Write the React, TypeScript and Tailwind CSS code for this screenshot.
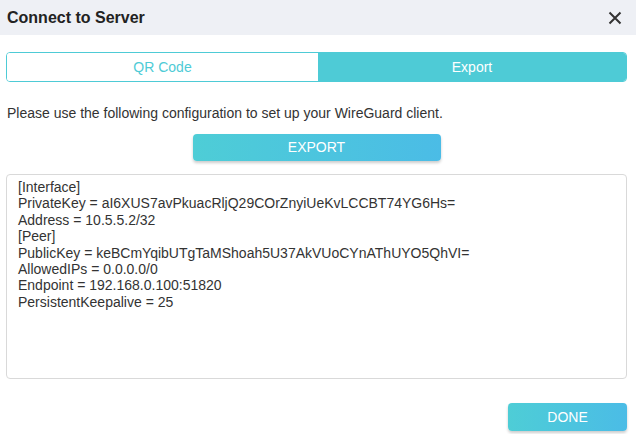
import React, { useState } from 'react';

const config = `[Interface]
PrivateKey = aI6XUS7avPkuacRljQ29COrZnyiUeKvLCCBT74YG6Hs=
Address = 10.5.5.2/32
[Peer]
PublicKey = keBCmYqibUTgTaMShoah5U37AkVUoCYnAThUYO5QhVI=
AllowedIPs = 0.0.0.0/0
Endpoint = 192.168.0.100:51820
PersistentKeepalive = 25`;

export default function App() {
  const [tab, setTab] = useState<'qr' | 'export'>('export');

  return (
    <div
      className="w-[636px] h-[434px] bg-white flex flex-col text-[#333]"
      style={{ fontFamily: '"Liberation Sans", Arial, sans-serif' }}
    >
      {/* Header */}
      <div className="h-[35px] shrink-0 bg-[#eef0f5] flex items-center justify-between pl-[7px] pr-[14px]">
        <span className="text-[16px] font-bold text-[#222]">Connect to Server</span>
        <button className="text-[#333]">
          <svg width="14" height="14" viewBox="0 0 14 14">
            <path d="M1.5 1.5 L12.5 12.5 M12.5 1.5 L1.5 12.5" stroke="currentColor" strokeWidth="2" />
          </svg>
        </button>
      </div>

      <div className="flex flex-col pl-[6px] pr-[9px] pt-[17px] flex-1">
        {/* Tabs */}
        <div className="flex h-[30px] rounded-[4px] border border-[#4ecbd6] overflow-hidden text-[14px]">
          <button
            onClick={() => setTab('qr')}
            className={`w-[311px] ${tab === 'qr' ? 'bg-[#4ecbd6] text-white' : 'bg-white text-[#4ecbd6]'}`}
          >
            QR Code
          </button>
          <button
            onClick={() => setTab('export')}
            className={`flex-1 ${tab === 'export' ? 'bg-[#4ecbd6] text-white' : 'bg-white text-[#4ecbd6]'}`}
          >
            Export
          </button>
        </div>

        <p className="mt-[23px] pl-[1px] text-[14px] leading-[16px] text-[#333]">
          Please use the following configuration to set up your WireGuard client.
        </p>

        {/* Export button */}
        <div className="flex justify-center mt-[13px]">
          <button className="w-[248px] h-[27px] rounded-[4px] bg-gradient-to-r from-[#4ecdd6] to-[#4bbce6] text-white text-[14px] shadow-[0_2px_3px_rgba(0,0,0,0.2)]">
            EXPORT
          </button>
        </div>

        {/* Config */}
        <div className="mt-[13px] h-[205px] rounded-[4px] border border-[#d9d9d9] pl-[11px] pt-[4px]">
          <pre
            className="text-[14px] leading-[16.4px] text-[#333] whitespace-pre"
            style={{ fontFamily: '"Liberation Sans", Arial, sans-serif' }}
          >
            {config}
          </pre>
        </div>

        {/* Footer */}
        <div className="flex justify-end mt-[24px]">
          <button className="w-[119px] h-[28px] rounded-[4px] bg-gradient-to-r from-[#4ecdd6] to-[#4bbce6] text-white text-[14px] shadow-[0_2px_3px_rgba(0,0,0,0.2)]">
            DONE
          </button>
        </div>
      </div>
    </div>
  );
}
